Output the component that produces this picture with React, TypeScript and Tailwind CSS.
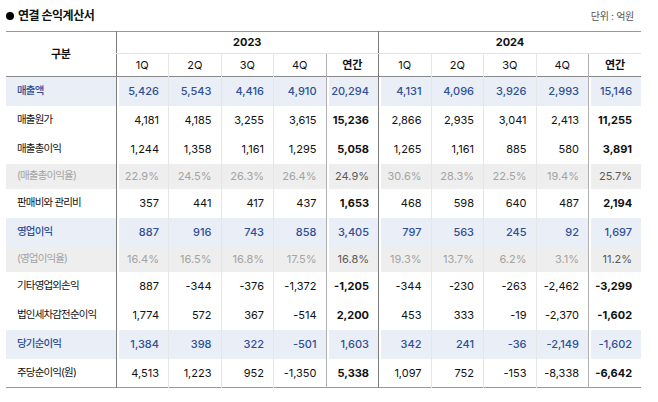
import React from 'react';

type RowType = 'normal' | 'blue' | 'pct';

interface Row {
  label: string;
  type: RowType;
  values: string[];
}

const rows: Row[] = [
  { label: '매출액', type: 'blue', values: ['5,426', '5,543', '4,416', '4,910', '20,294', '4,131', '4,096', '3,926', '2,993', '15,146'] },
  { label: '매출원가', type: 'normal', values: ['4,181', '4,185', '3,255', '3,615', '15,236', '2,866', '2,935', '3,041', '2,413', '11,255'] },
  { label: '매출총이익', type: 'normal', values: ['1,244', '1,358', '1,161', '1,295', '5,058', '1,265', '1,161', '885', '580', '3,891'] },
  { label: '(매출총이익율)', type: 'pct', values: ['22.9%', '24.5%', '26.3%', '26.4%', '24.9%', '30.6%', '28.3%', '22.5%', '19.4%', '25.7%'] },
  { label: '판매비와 관리비', type: 'normal', values: ['357', '441', '417', '437', '1,653', '468', '598', '640', '487', '2,194'] },
  { label: '영업이익', type: 'blue', values: ['887', '916', '743', '858', '3,405', '797', '563', '245', '92', '1,697'] },
  { label: '(영업이익율)', type: 'pct', values: ['16.4%', '16.5%', '16.8%', '17.5%', '16.8%', '19.3%', '13.7%', '6.2%', '3.1%', '11.2%'] },
  { label: '기타영업외손익', type: 'normal', values: ['887', '-344', '-376', '-1,372', '-1,205', '-344', '-230', '-263', '-2,462', '-3,299'] },
  { label: '법인세차감전순이익', type: 'normal', values: ['1,774', '572', '367', '-514', '2,200', '453', '333', '-19', '-2,370', '-1,602'] },
  { label: '당기순이익', type: 'blue', values: ['1,384', '398', '322', '-501', '1,603', '342', '241', '-36', '-2,149', '-1,602'] },
  { label: '주당순이익(원)', type: 'normal', values: ['4,513', '1,223', '952', '-1,350', '5,338', '1,097', '752', '-153', '-8,338', '-6,642'] },
];

// left border per data column
const colBorder = [
  'border-l border-l-[#7c7c7c]',
  'border-l border-l-[#e6e6e6]',
  'border-l border-l-[#e6e6e6]',
  'border-l border-l-[#e6e6e6]',
  'border-l border-l-[#b0b0b0]',
  'border-l border-l-[#7c7c7c]',
  'border-l border-l-[#e6e6e6]',
  'border-l border-l-[#e6e6e6]',
  'border-l border-l-[#e6e6e6]',
  'border-l border-l-[#b0b0b0]',
];

const gapCols = [0, 4, 5, 9];

const quarters = ['1Q', '2Q', '3Q', '4Q', '연간', '1Q', '2Q', '3Q', '4Q', '연간'];

const App: React.FC = () => {
  return (
    <div className="w-[658px] h-[402px] bg-white font-['Inter','Noto_Sans_CJK_KR',sans-serif] text-[#111]">
      <div className="flex items-center justify-between h-[31px] pl-[6px] pr-[24px] pt-[1px]">
        <div className="flex items-center gap-[4px]">
          <span className="w-[8px] h-[8px] rounded-full bg-black" />
          <span className="text-[12px] font-bold tracking-[-0.04em]">연결 손익계산서</span>
        </div>
        <span className="text-[10px] text-[#555] tracking-[-0.03em]">단위 : 억원</span>
      </div>

      <table className="ml-[6px] w-[635px] table-fixed border-collapse text-[11px]">
        <colgroup>
          <col className="w-[110px]" />
          {quarters.map((_, i) => (
            <col key={i} className="w-[52.5px]" />
          ))}
        </colgroup>
        <thead>
          <tr className="h-[22px] border-t border-t-[#999]">
            <th rowSpan={2} className="font-bold text-center border-b border-b-[#8a8a8a] tracking-[-0.03em]">
              구분
            </th>
            <th colSpan={5} className="font-bold text-center border-l border-l-[#7c7c7c] border-b border-b-[#e2e2e2]">
              2023
            </th>
            <th colSpan={5} className="font-bold text-center border-l border-l-[#7c7c7c] border-b border-b-[#e2e2e2]">
              2024
            </th>
          </tr>
          <tr className="h-[23px] border-b border-b-[#8a8a8a]">
            {quarters.map((q, i) => (
              <th
                key={i}
                className={`text-center ${colBorder[i]} ${q === '연간' ? 'font-bold' : 'font-normal'}`}
              >
                {q}
              </th>
            ))}
          </tr>
        </thead>
        <tbody>
          {rows.map((row) => {
            const rowCls =
              row.type === 'blue'
                ? 'h-[29px] bg-[#e9eef7] text-[#2f4f96] font-medium'
                : row.type === 'pct'
                ? 'h-[25px] bg-[#eeeeee] text-[#a3a3a3]'
                : 'h-[29px] text-[#111]';
            return (
              <tr key={row.label} className={rowCls}>
                <td className="pl-[11px] text-left text-[10.5px] tracking-[-0.08em] whitespace-nowrap">{row.label}</td>
                {row.values.map((v, i) => {
                  const annual = i === 4 || i === 9;
                  let tone = '';
                  if (row.type === 'normal' && annual) tone = 'font-bold';
                  if (row.type === 'pct' && annual) tone = 'text-[#5a5a5a]';
                  const gap = row.type !== 'normal' && gapCols.includes(i) ? 'shadow-[inset_2px_0_0_#fff]' : '';
                  return (
                    <td key={i} className={`text-right pr-[9px] ${colBorder[i]} ${tone} ${gap}`}>
                      {v}
                    </td>
                  );
                })}
              </tr>
            );
          })}
        </tbody>
        <tfoot>
          <tr>
            <td colSpan={11} className="border-t border-t-[#999] h-0 p-0" />
          </tr>
        </tfoot>
      </table>
    </div>
  );
};

export default App;
